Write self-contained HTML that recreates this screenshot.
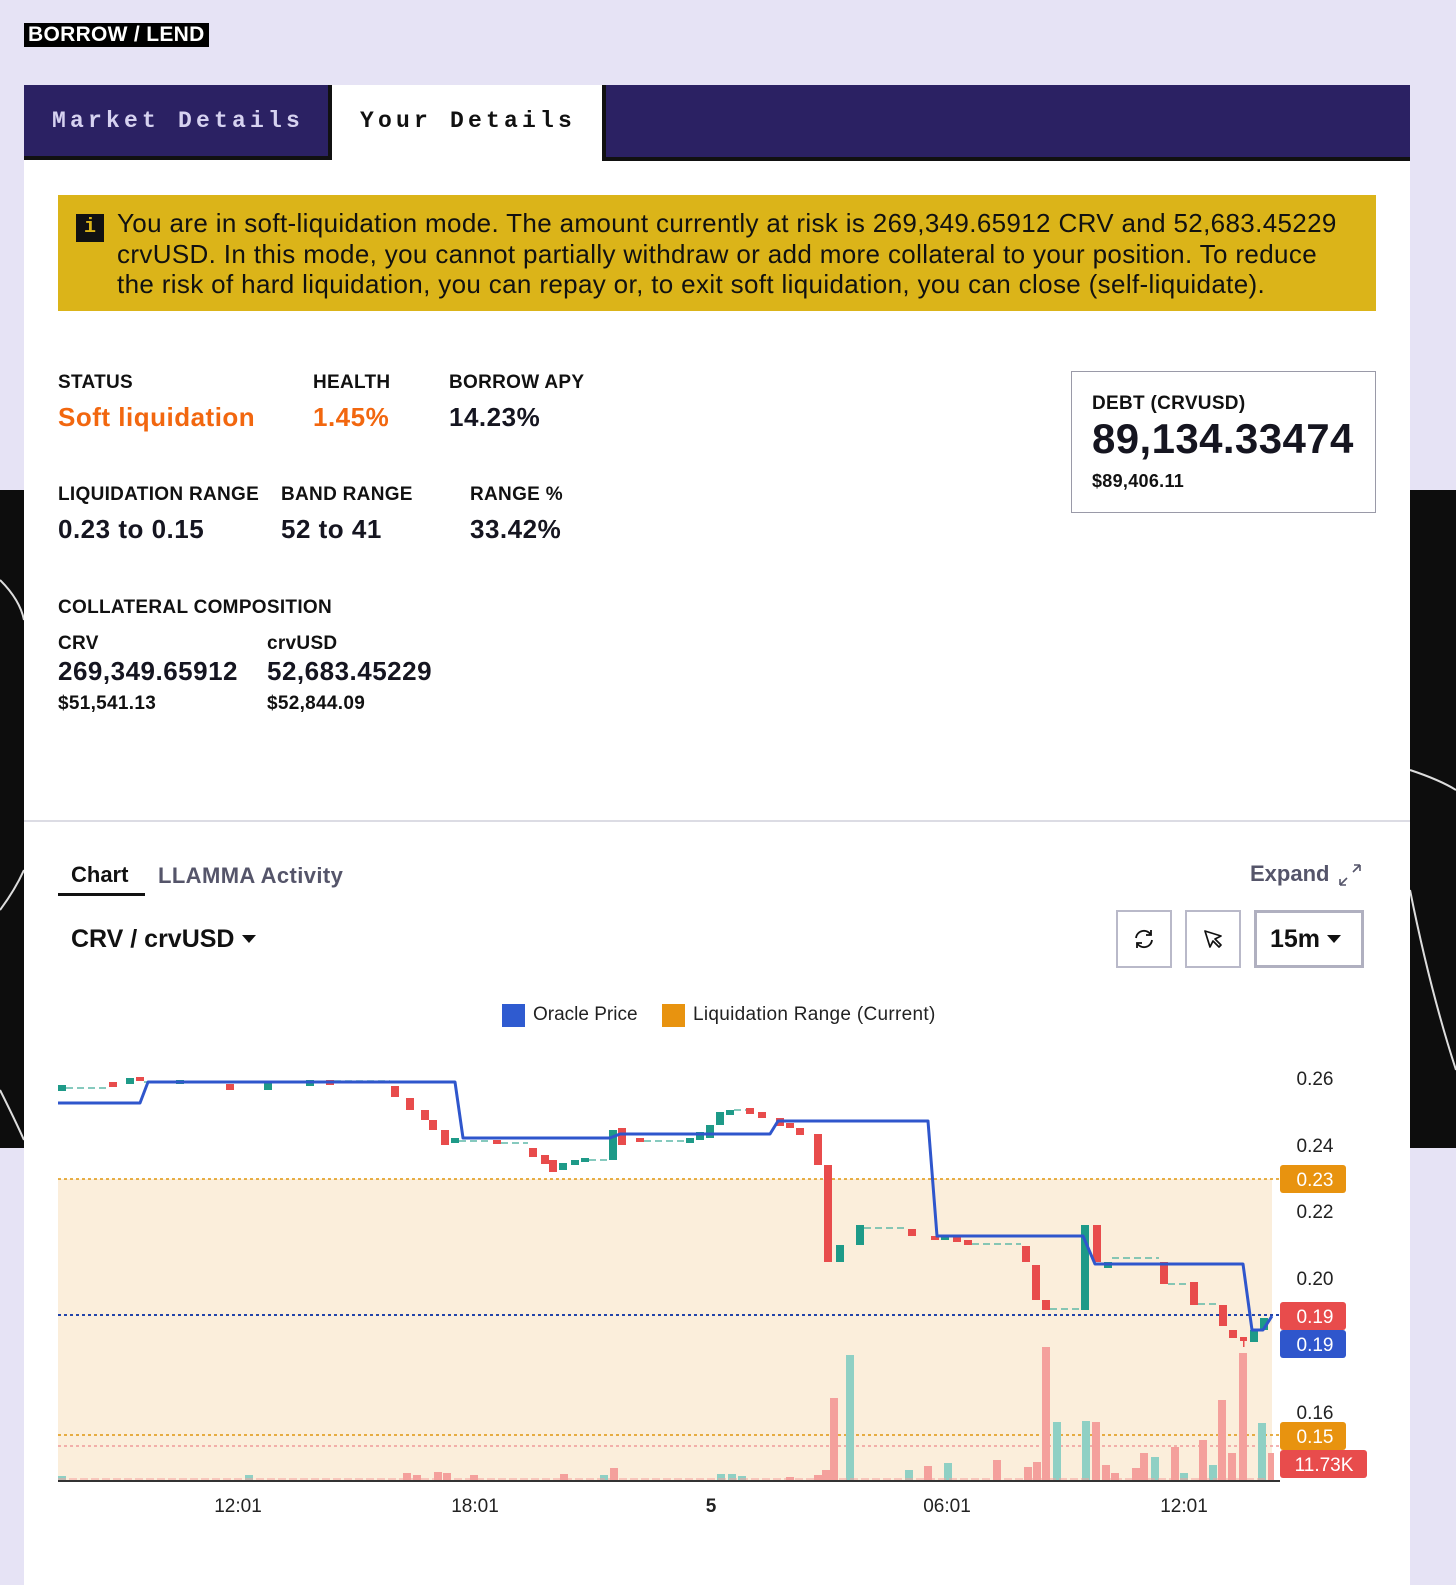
<!DOCTYPE html>
<html><head><meta charset="utf-8">
<style>
*{margin:0;padding:0;box-sizing:border-box}
body{width:1456px;height:1576px;background:#e6e3f5;position:relative;overflow:hidden;font-family:"Liberation Sans",sans-serif;color:#111}
.a{position:absolute;white-space:nowrap}
.dark{background:#0d0d0d;position:absolute}
.lbl{font-size:19px;font-weight:bold;letter-spacing:0.3px;color:#111}
.val{font-size:26px;font-weight:bold;letter-spacing:0.5px;color:#151520}
.tab{font-family:"Liberation Mono",monospace;font-weight:bold;font-size:23px;letter-spacing:4.2px}
.btn{position:absolute;border:2px solid #b9b9c9;background:#fff}
</style></head><body>
<div class="dark" style="left:0;top:490px;width:24px;height:658px"></div>
<div class="dark" style="left:1410px;top:490px;width:46px;height:658px"></div>
<svg class="a" style="left:0;top:490px" width="1456" height="658">
<path d="M0 90 Q20 110 24 130 M0 420 Q15 400 24 380 M0 600 Q15 630 24 650" stroke="#ddd" stroke-width="2" fill="none"/>
<path d="M1410 280 Q1440 290 1456 300 M1410 400 Q1430 500 1456 580" stroke="#ddd" stroke-width="2" fill="none"/>
</svg>

<div class="a" style="left:24px;top:23px;background:#000;color:#fff;font-weight:bold;font-size:21px;padding:1px 4px;line-height:22px;letter-spacing:0.3px">BORROW / LEND</div>

<div class="a" style="left:24px;top:85px;width:1386px;height:1500px;background:#fff"></div>
<div class="a" style="left:24px;top:85px;width:308px;height:75px;background:#2b2163;border-right:4px solid #111;border-bottom:4px solid #111"></div>
<div class="a tab" style="left:52px;top:108px;color:#d6d2f0">Market Details</div>
<div class="a tab" style="left:360px;top:108px;color:#111">Your Details</div>
<div class="a" style="left:602px;top:85px;width:808px;height:76px;background:#2b2163;border-left:4px solid #111;border-bottom:4px solid #111"></div>

<div class="a" style="left:58px;top:195px;width:1318px;height:116px;background:#dbb419"></div>
<div class="a" style="left:76px;top:214px;width:28px;height:28px;background:#111;color:#dbb419;font-weight:bold;font-size:20px;text-align:center;line-height:28px;font-family:'Liberation Mono',monospace">i</div>
<div class="a" style="left:117px;top:208px;font-size:26px;line-height:30.5px;color:#111;letter-spacing:0.35px">You are in soft-liquidation mode. The amount currently at risk is 269,349.65912 CRV and 52,683.45229<br>crvUSD. In this mode, you cannot partially withdraw or add more collateral to your position. To reduce<br>the risk of hard liquidation, you can repay or, to exit soft liquidation, you can close (self-liquidate).</div>

<div class="a lbl" style="left:58px;top:372px">STATUS</div>
<div class="a val" style="left:58px;top:402px;color:#f2670f">Soft liquidation</div>
<div class="a lbl" style="left:313px;top:372px">HEALTH</div>
<div class="a val" style="left:313px;top:402px;color:#f2670f">1.45%</div>
<div class="a lbl" style="left:449px;top:372px">BORROW APY</div>
<div class="a val" style="left:449px;top:402px">14.23%</div>

<div class="a lbl" style="left:58px;top:484px">LIQUIDATION RANGE</div>
<div class="a val" style="left:58px;top:514px">0.23 to 0.15</div>
<div class="a lbl" style="left:281px;top:484px">BAND RANGE</div>
<div class="a val" style="left:281px;top:514px">52 to 41</div>
<div class="a lbl" style="left:470px;top:484px">RANGE %</div>
<div class="a val" style="left:470px;top:514px">33.42%</div>

<div class="a lbl" style="left:58px;top:597px">COLLATERAL COMPOSITION</div>
<div class="a lbl" style="left:58px;top:633px">CRV</div>
<div class="a val" style="left:58px;top:656px">269,349.65912</div>
<div class="a lbl" style="left:58px;top:693px">$51,541.13</div>
<div class="a lbl" style="left:267px;top:633px">crvUSD</div>
<div class="a val" style="left:267px;top:656px">52,683.45229</div>
<div class="a lbl" style="left:267px;top:693px">$52,844.09</div>

<div class="a" style="left:1071px;top:371px;width:305px;height:142px;border:1.5px solid #9a9aa8"></div>
<div class="a lbl" style="left:1092px;top:393px">DEBT (CRVUSD)</div>
<div class="a" style="left:1092px;top:415px;font-size:42px;font-weight:bold;color:#151520;letter-spacing:0.4px">89,134.33474</div>
<div class="a lbl" style="left:1092px;top:471px;font-size:18px">$89,406.11</div>

<div class="a" style="left:24px;top:820px;width:1386px;height:2px;background:#dcdce4"></div>

<div class="a" style="left:71px;top:862px;font-size:22px;font-weight:bold">Chart</div>
<div class="a" style="left:58px;top:893px;width:87px;height:3px;background:#111"></div>
<div class="a" style="left:158px;top:863px;font-size:22px;font-weight:bold;color:#55556a;letter-spacing:0.4px">LLAMMA Activity</div>
<div class="a" style="left:1250px;top:861px;font-size:22px;font-weight:bold;color:#55556a">Expand</div>
<svg class="a" style="left:1337px;top:862px" width="26" height="26"><path d="M3 23 L10 16 M3 23 V17 M3 23 H9 M23 3 L16 10 M23 3 V9 M23 3 H17" stroke="#55556a" stroke-width="1.6" fill="none"/></svg>

<div class="a" style="left:71px;top:925px;font-size:25px;font-weight:bold">CRV / crvUSD</div>
<svg class="a" style="left:242px;top:935px" width="14" height="10"><path d="M0 0 H14 L7 8Z" fill="#111"/></svg>

<div class="btn" style="left:1116px;top:910px;width:56px;height:58px"></div>
<svg class="a" style="left:1130px;top:925px" width="28" height="28"><path d="M6 13 A8 8 0 0 1 21 10 M22 15 A8 8 0 0 1 7 18" stroke="#111" stroke-width="1.8" fill="none"/><path d="M21 5 V10 H16 M7 23 V18 H12" stroke="#111" stroke-width="1.8" fill="none"/></svg>
<div class="btn" style="left:1185px;top:910px;width:56px;height:58px"></div>
<svg class="a" style="left:1200px;top:926px" width="28" height="28"><path d="M5 5 L10 21 L13 15 L19 21 L21 19 L15 13 L21 10 Z" stroke="#111" stroke-width="1.7" fill="none" stroke-linejoin="round"/></svg>
<div class="btn" style="left:1254px;top:910px;width:110px;height:58px;border:3px solid #b0b0c0"></div>
<div class="a" style="left:1270px;top:925px;font-size:25px;font-weight:bold">15m</div>
<svg class="a" style="left:1327px;top:935px" width="14" height="10"><path d="M0 0 H14 L7 8Z" fill="#111"/></svg>

<div class="a" style="left:502px;top:1004px;width:23px;height:23px;background:#2f5bd0"></div>
<div class="a" style="left:533px;top:1004px;font-size:19px;color:#222">Oracle Price</div>
<div class="a" style="left:662px;top:1004px;width:23px;height:23px;background:#e8930f"></div>
<div class="a" style="left:693px;top:1004px;font-size:19px;color:#222;letter-spacing:0.3px">Liquidation Range (Current)</div>

<svg class="a" style="left:0;top:0" width="1456" height="1576" font-family="Liberation Sans, sans-serif">
<rect x="58" y="1179" width="1214" height="301" fill="#fbeedb"/>
<line x1="58" y1="1179" x2="1280" y2="1179" stroke="#e0960f" stroke-width="1.5" stroke-dasharray="3,3"/>
<line x1="58" y1="1435" x2="1280" y2="1435" stroke="#e0960f" stroke-width="1.5" stroke-dasharray="3,3"/>
<line x1="58" y1="1446" x2="1280" y2="1446" stroke="#f09a9a" stroke-width="1.5" stroke-dasharray="3,3"/>
<line x1="58" y1="1315" x2="1280" y2="1315" stroke="#2244aa" stroke-width="2" stroke-dasharray="3,3"/>
<g>
<g fill="#f4a09c">
<rect x="830" y="1398" width="8" height="82"/><rect x="822" y="1470" width="8" height="10"/><rect x="814" y="1475" width="8" height="5"/>
<rect x="924" y="1466" width="8" height="14"/><rect x="993" y="1460" width="8" height="20"/><rect x="1024" y="1467" width="8" height="13"/>
<rect x="1033" y="1462" width="8" height="18"/><rect x="1042" y="1347" width="8" height="133"/><rect x="1092" y="1422" width="8" height="58"/>
<rect x="1102" y="1465" width="8" height="15"/><rect x="1111" y="1473" width="8" height="7"/><rect x="1132" y="1468" width="8" height="12"/>
<rect x="1140" y="1453" width="8" height="27"/><rect x="1171" y="1447" width="8" height="33"/><rect x="1199" y="1440" width="8" height="40"/>
<rect x="1218" y="1400" width="8" height="80"/><rect x="1228" y="1453" width="8" height="27"/><rect x="1239" y="1353" width="8" height="127"/>
<rect x="1268" y="1453" width="6" height="27"/>
<rect x="403" y="1473" width="8" height="7"/><rect x="413" y="1475" width="8" height="5"/><rect x="434" y="1472" width="8" height="8"/><rect x="443" y="1473" width="8" height="7"/><rect x="470" y="1475" width="8" height="5"/><rect x="560" y="1474" width="8" height="6"/><rect x="610" y="1468" width="8" height="12"/><rect x="786" y="1477" width="8" height="3"/>
</g>
<g fill="#8fd0c4">
<rect x="846" y="1355" width="8" height="125"/><rect x="905" y="1470" width="8" height="10"/><rect x="944" y="1463" width="8" height="17"/>
<rect x="1053" y="1422" width="8" height="58"/><rect x="1082" y="1421" width="8" height="59"/><rect x="1151" y="1457" width="8" height="23"/>
<rect x="1180" y="1473" width="8" height="7"/><rect x="1209" y="1465" width="8" height="15"/><rect x="1258" y="1423" width="8" height="57"/>
<rect x="58" y="1476" width="8" height="4"/><rect x="245" y="1475" width="8" height="5"/><rect x="600" y="1475" width="8" height="5"/><rect x="717" y="1474" width="8" height="6"/><rect x="728" y="1474" width="8" height="6"/><rect x="738" y="1476" width="8" height="4"/>
</g>
<line x1="58" y1="1479" x2="1272" y2="1479" stroke="#f4a09c" stroke-width="1" stroke-dasharray="8,3"/>
</g>
<g>
<g fill="#e84c4c">
<rect x="109" y="1082" width="8" height="5"/><rect x="136" y="1077" width="8" height="4"/><rect x="226" y="1084" width="8" height="6"/><rect x="326" y="1080" width="8" height="5"/>
<rect x="391" y="1086" width="8" height="11"/><rect x="406" y="1098" width="8" height="12"/><rect x="421" y="1110" width="8" height="10"/><rect x="429" y="1120" width="8" height="10"/><rect x="441" y="1130" width="8" height="15"/>
<rect x="493" y="1140" width="8" height="4"/><rect x="529" y="1148" width="8" height="9"/><rect x="541" y="1155" width="8" height="9"/><rect x="549" y="1160" width="8" height="12"/>
<rect x="618" y="1128" width="8" height="17"/><rect x="636" y="1138" width="8" height="4"/><rect x="746" y="1108" width="8" height="6"/><rect x="758" y="1112" width="8" height="6"/>
<rect x="776" y="1118" width="8" height="8"/><rect x="786" y="1123" width="8" height="5"/><rect x="796" y="1128" width="8" height="7"/><rect x="814" y="1134" width="8" height="31"/><rect x="824" y="1165" width="8" height="97"/>
<rect x="908" y="1229" width="8" height="7"/><rect x="931" y="1236" width="8" height="4"/><rect x="953" y="1236" width="8" height="6"/><rect x="964" y="1240" width="8" height="5"/>
<rect x="1022" y="1246" width="8" height="16"/><rect x="1032" y="1265" width="8" height="35"/><rect x="1042" y="1300" width="8" height="10"/>
<rect x="1093" y="1225" width="8" height="37"/><rect x="1160" y="1262" width="8" height="22"/><rect x="1190" y="1282" width="8" height="23"/><rect x="1219" y="1305" width="8" height="21"/><rect x="1229" y="1330" width="8" height="8"/><rect x="1240" y="1337" width="7" height="4"/><rect x="1243" y="1337" width="1.5" height="10"/>
</g>
<g fill="#1e9a88">
<rect x="58" y="1085" width="8" height="6"/><rect x="126" y="1078" width="8" height="6"/><rect x="176" y="1080" width="8" height="4"/><rect x="264" y="1082" width="8" height="8"/><rect x="306" y="1080" width="8" height="6"/>
<rect x="451" y="1138" width="8" height="5"/><rect x="559" y="1163" width="8" height="7"/><rect x="571" y="1160" width="8" height="5"/><rect x="581" y="1158" width="8" height="4"/><rect x="609" y="1130" width="8" height="30"/>
<rect x="686" y="1138" width="8" height="5"/><rect x="696" y="1132" width="8" height="8"/><rect x="706" y="1125" width="8" height="13"/><rect x="716" y="1112" width="8" height="13"/><rect x="726" y="1110" width="8" height="5"/>
<rect x="836" y="1245" width="8" height="17"/><rect x="856" y="1225" width="8" height="20"/><rect x="941" y="1236" width="8" height="4"/>
<rect x="1081" y="1225" width="8" height="85"/><rect x="1104" y="1262" width="8" height="6"/><rect x="1250" y="1330" width="8" height="12"/><rect x="1260" y="1318" width="8" height="12"/>
</g>
<g stroke="#5fb8a8" stroke-width="1.5" stroke-dasharray="7,4" fill="none">
<path d="M66 1088 H108 M144 1082 H300 M334 1081 H390 M459 1141 H490 M501 1143 H528 M589 1160 H608 M644 1141 H685 M734 1110 H746 M864 1228 H907 M972 1244 H1021 M1050 1309 H1080 M1112 1258 H1159 M1168 1284 H1190 M1198 1304 H1219"/>
</g>
</g>
<polyline points="58,1103 140,1103 148,1082 455,1082 463,1138 610,1138 620,1134 770,1134 778,1121 928,1121 937,1236 1083,1236 1095,1264 1243,1264 1252,1330 1263,1330 1272,1316" stroke="#2f56cc" stroke-width="3" fill="none" stroke-linejoin="round"/>
<line x1="58" y1="1481" x2="1280" y2="1481" stroke="#333" stroke-width="2"/>
<g font-size="19" fill="#222" text-anchor="middle">
<text x="1315" y="1085">0.26</text><text x="1315" y="1152">0.24</text><text x="1315" y="1218">0.22</text><text x="1315" y="1285">0.20</text><text x="1315" y="1419">0.16</text>
<text x="238" y="1512">12:01</text><text x="475" y="1512">18:01</text><text x="711" y="1512" font-weight="bold">5</text><text x="947" y="1512">06:01</text><text x="1184" y="1512">12:01</text>
</g>
<g font-size="19" fill="#fff" text-anchor="middle">
<rect x="1280" y="1165" width="66" height="28" rx="3" fill="#e8930f"/><text x="1315" y="1186">0.23</text>
<rect x="1280" y="1302" width="66" height="28" rx="3" fill="#e84c4c"/><text x="1315" y="1323">0.19</text>
<rect x="1280" y="1330" width="66" height="28" rx="3" fill="#2f56cc"/><text x="1315" y="1351">0.19</text>
<rect x="1280" y="1422" width="66" height="28" rx="3" fill="#e8930f"/><text x="1315" y="1443">0.15</text>
<rect x="1280" y="1450" width="87" height="28" rx="3" fill="#e84c4c"/><text x="1324" y="1471">11.73K</text>
</g>
</svg>
</body></html>
